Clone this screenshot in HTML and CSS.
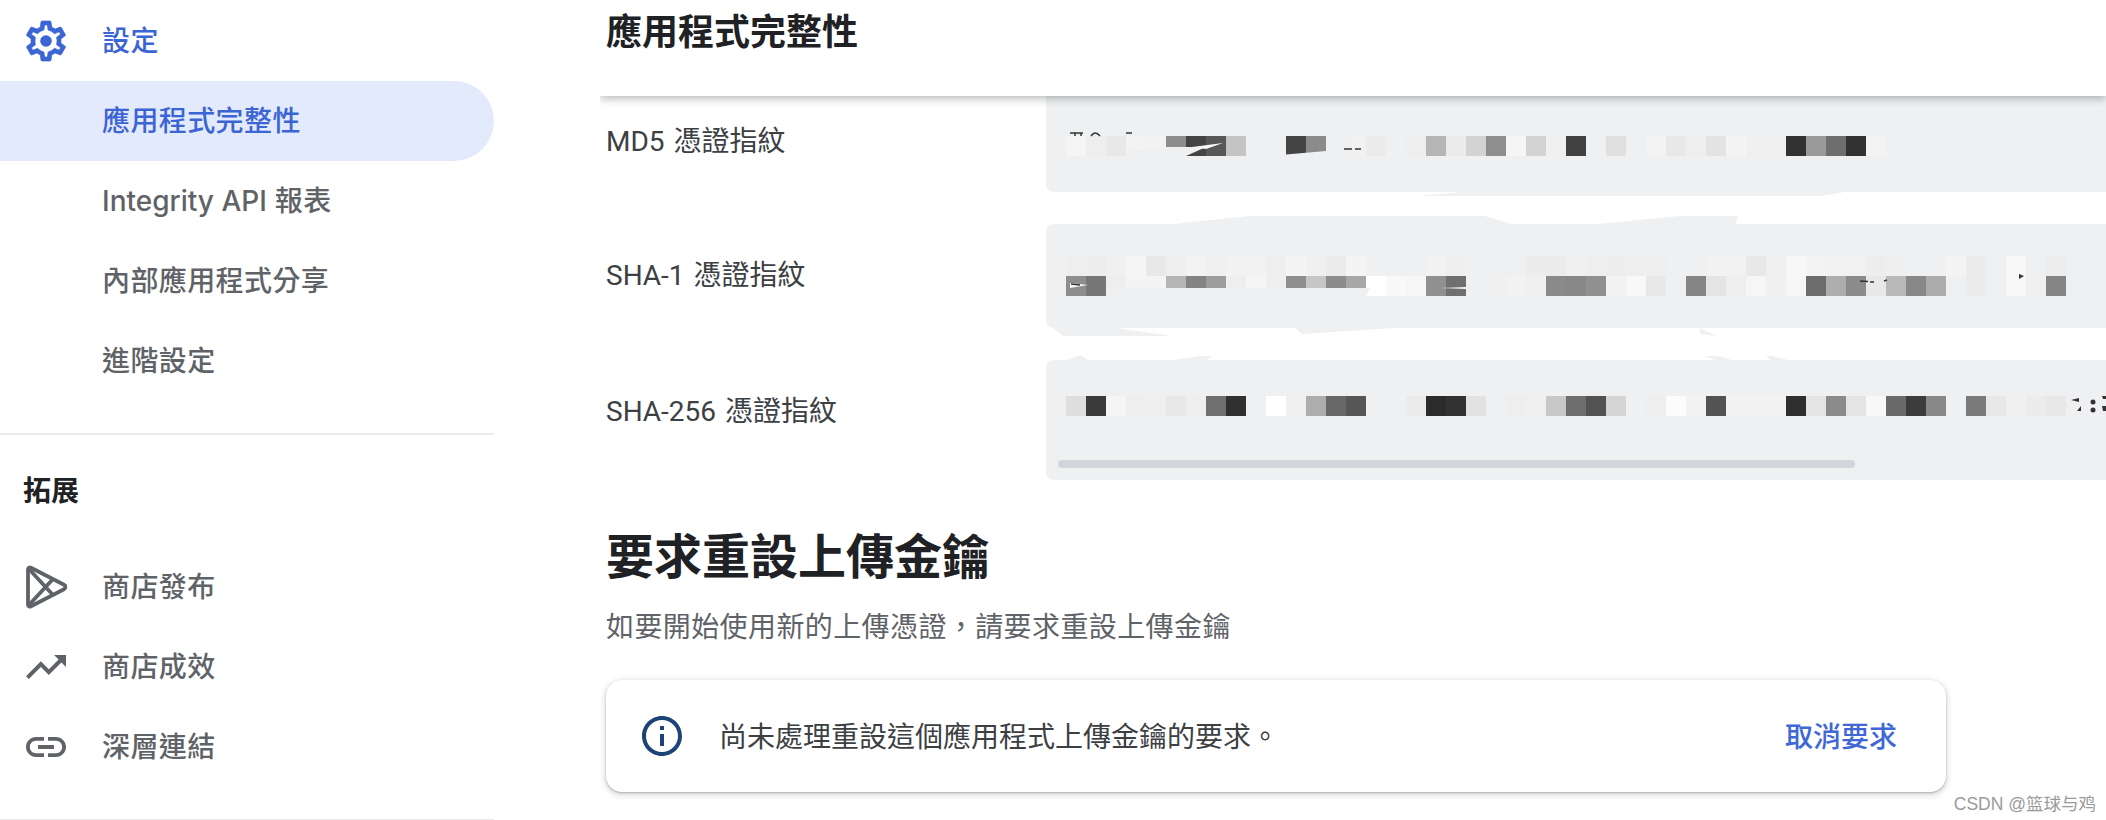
FILE: index.html
```html
<!DOCTYPE html>
<html lang="zh-Hant">
<head>
    <meta charset="UTF-8">
    <title>應用程式完整性</title>
    <link rel="stylesheet" href="styles.css">
</head>
<body>
    <div class="page">
        <nav class="sidebar">
            <div class="nav-item nav-current">
                <svg class="nav-icon gear-icon" viewBox="0 0 24 24"><path fill-rule="evenodd" d="M19.43 12.98c.04-.32.07-.64.07-.98 0-.34-.03-.66-.07-.98l2.11-1.65c.19-.15.24-.42.12-.64l-2-3.46c-.09-.16-.26-.25-.44-.25-.06 0-.12.01-.17.03l-2.49 1c-.52-.4-1.08-.73-1.69-.98l-.38-2.65C14.46 2.18 14.25 2 14 2h-4c-.25 0-.46.18-.49.42l-.38 2.65c-.61.25-1.17.59-1.69.98l-2.49-1c-.06-.02-.12-.03-.18-.03-.17 0-.34.09-.43.25l-2 3.46c-.13.22-.07.49.12.64l2.11 1.65c-.04.32-.07.65-.07.98 0 .33.03.66.07.98l-2.11 1.65c-.19.15-.24.42-.12.64l2 3.46c.09.16.26.25.44.25.06 0 .12-.01.17-.03l2.49-1c.52.4 1.08.73 1.69.98l.38 2.65c.03.24.24.42.49.42h4c.25 0 .46-.18.49-.42l.38-2.65c.61-.25 1.17-.59 1.69-.98l2.49 1c.06.02.12.03.18.03.17 0 .34-.09.43-.25l2-3.46c.12-.22.07-.49-.12-.64l-2.11-1.65zm-1.98-1.71c.04.31.05.52.05.73 0 .21-.02.43-.05.73l-.14 1.13.89.7 1.08.84-.7 1.21-1.27-.51-1.04-.42-.9.68c-.43.32-.84.56-1.25.73l-1.06.43-.16 1.13-.2 1.35h-1.4l-.19-1.35-.16-1.13-1.06-.43c-.43-.18-.83-.41-1.23-.71l-.91-.7-1.06.43-1.27.51-.7-1.21 1.08-.84.89-.7-.14-1.13c-.03-.31-.05-.54-.05-.74s.02-.43.05-.73l.14-1.13-.89-.7-1.08-.84.7-1.21 1.27.51 1.04.42.9-.68c.43-.32.84-.56 1.25-.73l1.06-.43.16-1.13.2-1.35h1.39l.19 1.35.16 1.13 1.06.43c.43.18.83.41 1.23.71l.91.7 1.06-.43 1.27-.51.7 1.21-1.07.85-.89.7.14 1.13z"/><circle cx="12" cy="12" r="2.900"/></svg>
                <span>設定</span>
            </div>
            <div class="nav-item nav-sub nav-active">應用程式完整性</div>
            <div class="nav-item nav-sub"><span><span class="nav-latin">Integrity API</span> 報表</span></div>
            <div class="nav-item nav-sub">內部應用程式分享</div>
            <div class="nav-item nav-sub">進階設定</div>

            <hr class="nav-divider">
            <div class="nav-heading">拓展</div>

            <div class="nav-item">
                <svg class="nav-icon play-icon" viewBox="0 0 48 48"><path d="M6 6.500c0-1.800 1.600-2.600 3-1.800l33 17c1.800.9 1.800 3.700 0 4.600l-33 17c-1.400.8-3 0-3-1.800z"/><path d="M6 5l25 27M6 43l25-27"/></svg>
                <span>商店發布</span>
            </div>
            <div class="nav-item">
                <svg class="nav-icon" viewBox="0 0 24 24"><path d="M16 6l2.290 2.290-4.880 4.880-4-4L2 16.590 3.410 18l6-6 4 4 6.300-6.290L22 12V6z"/></svg>
                <span>商店成效</span>
            </div>
            <div class="nav-item">
                <svg class="nav-icon" viewBox="0 0 24 24"><path d="M3.900 12c0-1.710 1.390-3.100 3.100-3.100h4V7H7c-2.760 0-5 2.240-5 5s2.240 5 5 5h4v-1.900H7c-1.710 0-3.100-1.390-3.100-3.100zM8 13h8v-2H8v2zm9-6h-4v1.900h4c1.710 0 3.100 1.390 3.100 3.100s-1.390 3.100-3.100 3.100h-4V17h4c2.760 0 5-2.240 5-5s-2.240-5-5-5z"/></svg>
                <span>深層連結</span>
            </div>
            <hr class="nav-divider">
        </nav>

        <main class="content">
            <header class="content-header">應用程式完整性</header>

            <div class="cert-row">
                <div class="cert-label cert-label-first">MD5 憑證指紋</div>
                <div class="cert-value cert-first">
                    <div class="mosaic" data-cells="f5 ee e8 f3 f2 8d 44 58 c4 -- -- 44 8b -- f1 eb -- ee b5 eb d3 8e f5 d3 f0 40 -- e0 -- f3 e8 ee e3 f4 f0 f0 32 9a 6e 32 f3"></div>
                </div>
            </div>
            <div class="cert-row">
                <div class="cert-label">SHA-1 憑證指紋</div>
                <div class="cert-value">
                    <div class="mosaic" data-cells="ee ed f0 f5 e8 ee f3 f0 f2 f2 ee f4 f0 eb f4 -- -- -- f2 ef -- -- -- ec ec f0 ee ed ee ee -- -- f2 f2 e8 -- f7 f3 f2 f1 ed ef -- -- f4 ec -- f8 -- ed"></div>
                    <div class="mosaic" data-cells="8d 77 ee f4 f4 b5 83 9d ee f5 ee 8f c6 8c a7 ff f9 f6 90 6f -- f0 f2 f0 8a 88 90 f2 f8 e8 -- 85 e4 ee f6 f0 f6 6c ad 8b e8 b9 88 ac -- eb -- f8 f0 85"></div>
                </div>
            </div>
            <div class="cert-row">
                <div class="cert-label">SHA-256 憑證指紋</div>
                <div class="cert-value cert-scroll">
                    <div class="mosaic" data-cells="de 3a f5 ee ef e8 ee 6f 30 -- ff -- ad 67 56 -- -- eb 2b 32 e2 -- ee -- c8 6e 52 d4 -- ee fc f2 53 f2 f2 f2 2f e4 8b e4 f8 6a 3c 88 -- 7a e8 -- ec e8"></div>
                    <div class="scrollbar"></div>
                </div>
            </div>

            <h2 class="section-title">要求重設上傳金鑰</h2>
            <p class="section-text">如要開始使用新的上傳憑證&#65292;請要求重設上傳金鑰</p>

            <div class="notice">
                <svg class="notice-icon" viewBox="0 0 24 24"><path d="M11 7h2v2h-2zm0 4h2v6h-2zm1-9C6.480 2 2 6.480 2 12s4.480 10 10 10 10-4.480 10-10S17.520 2 12 2zm0 18c-4.410 0-8-3.590-8-8s3.590-8 8-8 8 3.590 8 8-3.590 8-8 8z"/></svg>
                <span class="notice-text">尚未處理重設這個應用程式上傳金鑰的要求。</span>
                <span class="notice-action">取消要求</span>
            </div>
        </main>
    </div>

    <!-- redaction smears on top of the fingerprint boxes -->
    <svg class="smears" width="2106" height="820" viewBox="0 0 2106 820">
        <g fill="#eff0f2">
            <path d="M1126 151l40-3v8h-40z"/>
            <path d="M1166 147h40l-20 9h-20z"/>
            <path d="M1286 154.500l40-3.500v5h-40z"/>
            <path d="M1418 196l44-4h383l-25 4z"/>
            <path d="M1173 224l77-8h235l26 8z"/>
            <path d="M1598 224l82-8h58l-3 8z"/>
            <path d="M1106 296v-6l10-2h254l-4 8z"/>
            <path d="M1046 322l17 14h110l-58-8z"/>
            <path d="M1295 328l7 6 92-6z"/>
            <path d="M1700 328l16 8-16-2z"/>
            <path d="M1066 360l12-4h4l6 4z"/>
            <path d="M1172 360l30-4h10l-6 4z"/>
            <path d="M1716 360l-12-4h14l14 4z"/>
            <path d="M1766 356h6l16 4h-18z"/>
        </g>
        <g fill="#f8f8f9">
            <path d="M1192 147l31-4-17 6z"/>
            <path d="M1070 283l18 2-18 3z"/>
            <path d="M1441 288l25-1v2z"/>
        </g>
        <g fill="none" stroke="#333" stroke-width="1.500">
            <path d="M1070 133h13M1075 133v3M1081 133v3"/>
            <path d="M1091 136q4-6 9 0"/>
            <path d="M1126 133h6"/>
            <path d="M1344 149h8M1355 149h6"/>
            <path d="M1071 284l9 1"/>
            <path d="M1860 281l8 .5M1870 282h4M1884 281l3-1"/>
        </g>
        <g fill="#333">
            <path d="M2019 274l5 2-5 3z"/>
            <circle cx="2093" cy="402" r="2.500"/>
            <circle cx="2093" cy="410" r="2.500"/>
            <path d="M2071 400l8-2v4zM2077 411l4-5v5zM2102 396h4v3h-3zM2102 406h4v5h-3z"/>
        </g>
    </svg>

    <div class="watermark">CSDN @篮球与鸡</div>

    <script src="mosaic.js"></script>
</body>
</html>
```

FILE: styles.css
```css
body {
    margin: 0;
    height: 820px;
    overflow: hidden;
    position: relative;
    background-color: #fff;
    font-family: Roboto, "Noto Sans CJK TC", sans-serif;
    font-size: 28px;
    color: #3c4043;
}
.page {
    display: flex;
    height: 820px;
}

/* sidebar */
.sidebar {
    width: 494px;
    flex-shrink: 0;
    margin-right: 106px;
    padding-top: 1px;
}
.nav-item {
    display: flex;
    align-items: center;
    gap: 32px;
    box-sizing: border-box;
    height: 80px;
    padding: 0 0 5px 22px;
    font-family: Inter, "Noto Sans CJK TC", sans-serif;
    font-weight: 500;
    letter-spacing: 0.4px;
    color: #5f6368;
}
.nav-sub {
    padding-left: 102px;
}
.nav-latin {
    letter-spacing: 0;
}
.nav-current {
    color: #3b64d4;
}
.nav-active {
    color: #3b64d4;
    background-color: #e2eafb;
    border-radius: 0 40px 40px 0;
}
.nav-icon {
    width: 48px;
    height: 48px;
    flex-shrink: 0;
    margin-bottom: -5px;
    fill: currentColor;
}
.gear-icon path {
    stroke: currentColor;
    stroke-width: 0.35;
}
.play-icon {
    fill: none;
    stroke: currentColor;
    stroke-width: 3.8;
    stroke-linejoin: round;
}
.nav-divider {
    height: 2px;
    margin: 32px 0 0;
    border: none;
    background-color: #e8e9eb;
}
.nav-heading {
    margin: 41px 0 39px 23px;
    line-height: 32px;
    font-weight: 700;
    color: #202124;
}

/* main column */
.content {
    flex: 1;
    min-width: 0;
    padding-left: 6px;
}
.content-header {
    position: relative;
    z-index: 2;
    height: 96px;
    margin: 0 0 -10px -6px;
    padding-left: 6px;
    line-height: 66px;
    font-size: 36px;
    font-weight: 700;
    color: #202124;
    background-color: #fff;
    box-shadow: 0 3px 8px rgba(60, 64, 67, 0.35);
    clip-path: inset(0 0 -20px 0);
}
.cert-row {
    display: flex;
    margin-bottom: 32px;
}
.cert-label {
    width: 440px;
    flex-shrink: 0;
    padding-top: 36px;
    line-height: 32px;
    word-spacing: 2px;
}
.cert-label-first {
    padding-top: 40px;
}
.cert-value {
    flex: 1;
    min-width: 0;
    padding: 32px 0 32px 20px;
    background-color: #eff0f2;
    border-radius: 8px 0 0 8px;
}
.cert-first {
    padding: 50px 0 36px 20px;
}
.cert-scroll {
    padding: 36px 0 12px 20px;
}
.mosaic {
    display: flex;
    height: 20px;
}
.mosaic span {
    width: 20px;
    flex-shrink: 0;
}
.scrollbar {
    width: 797px;
    height: 8px;
    margin: 44px 0 0 -8px;
    background-color: #d4d5dc;
    border-radius: 4px;
}
.section-title {
    margin: 48px 0 0;
    line-height: 60px;
    font-size: 48px;
    font-weight: 700;
    color: #202124;
}
.section-text {
    margin: 22px 0 0;
    line-height: 36px;
    letter-spacing: 0.4px;
    color: #5f6368;
}
.notice {
    display: flex;
    align-items: center;
    gap: 33px;
    box-sizing: border-box;
    width: 1340px;
    height: 112px;
    margin-top: 34px;
    padding: 0 49px 0 32px;
    background-color: #fff;
    border-radius: 16px;
    box-shadow: 0 1px 2px rgba(60, 64, 67, 0.3), 0 2px 6px 1px rgba(60, 64, 67, 0.2);
}
.notice-icon {
    width: 48px;
    height: 48px;
    flex-shrink: 0;
    fill: #1d4477;
}
.notice-text {
    flex: 1;
    margin-bottom: 2px;
}
.notice-action {
    margin-bottom: 2px;
    font-weight: 500;
    color: #3f67d6;
}

/* overlays */
.smears {
    position: absolute;
    top: 0;
    left: 0;
    z-index: 1;
    pointer-events: none;
}
.watermark {
    position: absolute;
    top: 793px;
    right: 10px;
    z-index: 3;
    line-height: 22px;
    font-family: "Liberation Sans", "Noto Sans CJK SC", sans-serif;
    font-size: 17.500px;
    color: #9a9a9a;
}
```

FILE: mosaic.js
```js
// fill the redacted fingerprint rows, one 20px cell per grey value
document.querySelectorAll('.mosaic').forEach(function (row) {
    row.dataset.cells.split(' ').forEach(function (grey) {
        const cell = document.createElement('span');
        if (grey !== '--') {
            cell.style.backgroundColor = '#' + grey + grey + grey;
        }
        row.appendChild(cell);
    });
});
```
